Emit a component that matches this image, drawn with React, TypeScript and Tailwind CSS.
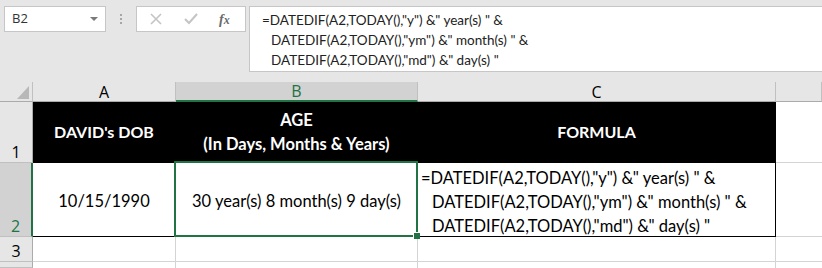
import React from "react";

function NameBox() {
  return (
    <div className="w-[102px] h-[26px] bg-white border border-[#c6c6c6] flex items-center justify-between pl-[7px] pr-[7px]">
      <span className="font-['Open_Sans',sans-serif] text-[13px] text-[#333]">B2</span>
      <svg width="8" height="4" viewBox="0 0 8 4">
        <path d="M0 0 H8 L4 4 Z" fill="#7a7a7a" />
      </svg>
    </div>
  );
}

function FormulaButtons() {
  return (
    <div className="w-[110px] h-[26px] bg-white border border-[#c6c6c6] flex items-center pl-[13px] gap-[22px]">
      <svg width="12" height="12" viewBox="0 0 12 12">
        <path d="M1 1 L11 11 M11 1 L1 11" stroke="#c4c4c4" strokeWidth="1.6" />
      </svg>
      <svg width="14" height="12" viewBox="0 0 14 12">
        <path d="M1 6 L5 10 L13 1" stroke="#c4c4c4" strokeWidth="2" fill="none" />
      </svg>
      <span className="font-['Liberation_Serif',serif] italic text-[14px] text-[#6b6b6b] font-bold -ml-[1px]">
        f<span className="text-[12px]">x</span>
      </span>
    </div>
  );
}

function FormulaBar() {
  return (
    <div className="flex-1 h-[66px] ml-[3px] bg-white border border-r-0 border-[#c6c6c6] pl-[12px] pt-[3px] font-['Lato',sans-serif] text-[13.5px] leading-[20px] text-[#222] whitespace-pre">
      <div>=DATEDIF(A2,TODAY(),"y") &amp;" year(s) " &amp;</div>
      <div className="pl-[9px]">DATEDIF(A2,TODAY(),"ym") &amp;" month(s) " &amp;</div>
      <div className="pl-[9px]">DATEDIF(A2,TODAY(),"md") &amp;" day(s) "</div>
    </div>
  );
}

function ColHead({ label, active }: { label: string; active?: boolean }) {
  return (
    <div
      className={
        active
          ? "bg-[#d2d2d2] border-r border-[#c0c0c0] border-b-2 border-b-[#217346] text-[#217346] flex items-center justify-center font-['Open_Sans',sans-serif] text-[16px] leading-none"
          : "bg-[#e6e6e6] border-r border-[#c0c0c0] border-b border-b-[#ababab] text-black flex items-center justify-center font-['Open_Sans',sans-serif] text-[16px] leading-none"
      }
    >
      {label}
    </div>
  );
}

function RowHead({ label, active }: { label: string; active?: boolean }) {
  return (
    <div
      className={
        active
          ? "bg-[#d2d2d2] border-r-2 border-r-[#217346] border-b border-b-[#c0c0c0] text-[#217346] flex items-end justify-center pb-[2px] font-['Open_Sans',sans-serif] text-[16px] leading-none"
          : "bg-[#e6e6e6] border-r border-r-[#ababab] border-b border-b-[#c0c0c0] text-black flex items-end justify-center pb-[2px] font-['Open_Sans',sans-serif] text-[16px] leading-none"
      }
    >
      {label}
    </div>
  );
}

export default function App() {
  return (
    <div className="w-[822px] h-[268px] overflow-hidden bg-white font-['Lato',sans-serif]">
      <div className="h-[82px] bg-[#e6e6e6] flex items-start pt-[6px] pl-[4px]">
        <NameBox />
        <div className="w-[30px] h-[26px] flex flex-col items-center justify-center gap-[2px]">
          <span className="w-[2px] h-[2px] bg-[#a6a6a6]" />
          <span className="w-[2px] h-[2px] bg-[#a6a6a6]" />
          <span className="w-[2px] h-[2px] bg-[#a6a6a6]" />
        </div>
        <FormulaButtons />
        <FormulaBar />
      </div>

      <div className="grid grid-cols-[33px_143px_242px_358px_1fr] grid-rows-[20px_61px_74px_25px_1fr] h-[186px]">
        {/* column headers */}
        <div className="bg-[#e6e6e6] border-r border-r-[#c0c0c0] border-b border-b-[#ababab] flex items-end justify-end pr-[3px] pb-[2px]">
          <svg width="12" height="13" viewBox="0 0 12 13">
            <path d="M12 0 V13 H0 Z" fill="#b8b8b8" />
          </svg>
        </div>
        <ColHead label="A" />
        <ColHead label="B" active />
        <ColHead label="C" />
        <ColHead label="" />

        {/* row 1 */}
        <RowHead label="1" />
        <div className="bg-black border-r border-b border-black flex items-center justify-center text-white font-bold text-[16px]">
          DAVID's DOB
        </div>
        <div className="bg-black border-r border-b border-black flex flex-col items-center justify-center text-white font-bold text-[16.5px] leading-[24px]">
          <span>AGE</span>
          <span>(In Days, Months &amp; Years)</span>
        </div>
        <div className="bg-black border-r border-b border-black flex items-center justify-center text-white font-bold text-[16px]">
          FORMULA
        </div>
        <div className="border-b border-[#d4d4d4]" />

        {/* row 2 */}
        <RowHead label="2" active />
        <div className="border-r border-r-[#d4d4d4] border-b border-b-black flex items-center justify-center text-black text-[16.5px] pt-[3px]">
          10/15/1990
        </div>
        <div className="relative border-r border-r-black border-b border-b-black flex items-center justify-center text-black text-[16.5px] pt-[3px]">
          30 year(s) 8 month(s) 9 day(s)
          <div className="absolute -left-[2px] -top-[2px] -right-[1px] -bottom-[1px] border-2 border-[#217346]" />
          <div className="absolute -right-[3px] -bottom-[3px] w-[7px] h-[7px] bg-[#217346] border border-white border-r-0 border-b-0" />
        </div>
        <div className="border-r border-r-black border-b border-b-black pl-[3px] pt-[3px] text-black text-[16.5px] leading-[24px] whitespace-pre">
          <div>=DATEDIF(A2,TODAY(),"y") &amp;" year(s) " &amp;</div>
          <div className="pl-[11px]">DATEDIF(A2,TODAY(),"ym") &amp;" month(s) " &amp;</div>
          <div className="pl-[11px]">DATEDIF(A2,TODAY(),"md") &amp;" day(s) "</div>
        </div>
        <div className="border-b border-[#d4d4d4]" />

        {/* row 3 */}
        <RowHead label="3" />
        <div className="border-r border-b border-[#d4d4d4]" />
        <div className="border-r border-b border-[#d4d4d4]" />
        <div className="border-r border-b border-[#d4d4d4]" />
        <div className="border-b border-[#d4d4d4]" />

        {/* row 4, mostly off screen */}
        <RowHead label="" />
        <div className="border-r border-[#d4d4d4]" />
        <div className="border-r border-[#d4d4d4]" />
        <div className="border-r border-[#d4d4d4]" />
        <div />
      </div>
    </div>
  );
}
